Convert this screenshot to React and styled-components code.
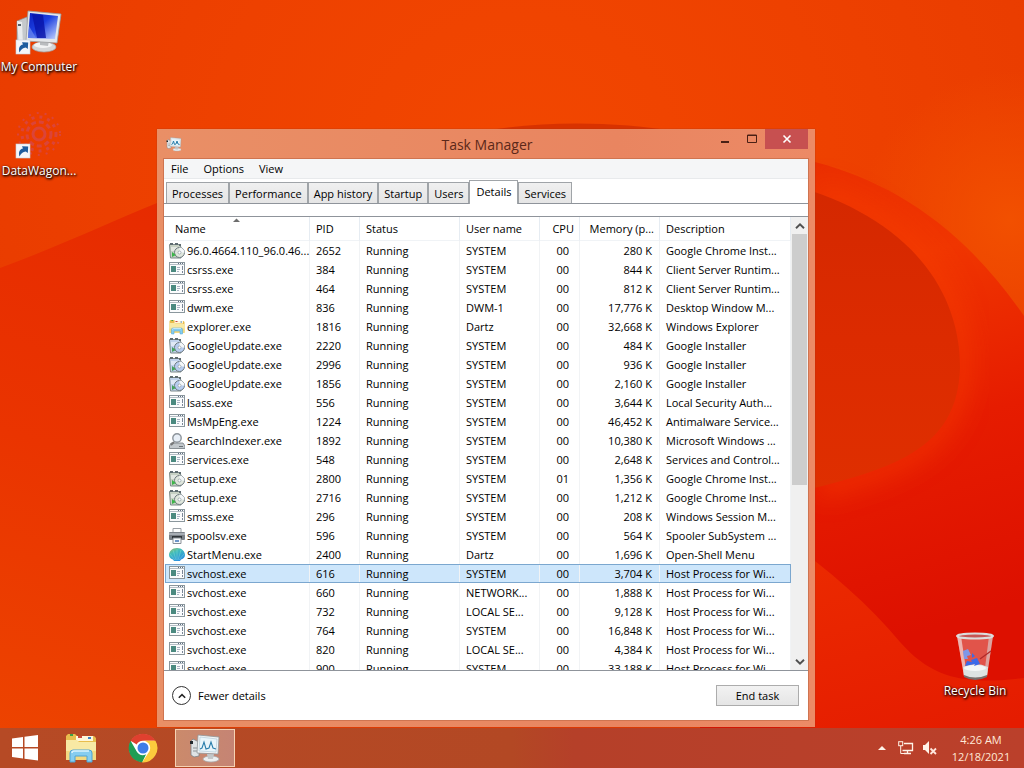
import { useState } from 'react';
import styled, { createGlobalStyle } from 'styled-components';

const columns = [
  { key: 'name', label: 'Name', width: 145 },
  { key: 'pid', label: 'PID', width: 50 },
  { key: 'status', label: 'Status', width: 100 },
  { key: 'user', label: 'User name', width: 80 },
  { key: 'cpu', label: 'CPU', width: 40, right: true },
  { key: 'memory', label: 'Memory (p...', width: 80, right: true },
  { key: 'description', label: 'Description' },
];

const processes = [
  ['setup', '96.0.4664.110_96.0.46...', '2652', 'SYSTEM', '00', '280 K', 'Google Chrome Inst...'],
  ['app', 'csrss.exe', '384', 'SYSTEM', '00', '844 K', 'Client Server Runtim...'],
  ['app', 'csrss.exe', '464', 'SYSTEM', '00', '812 K', 'Client Server Runtim...'],
  ['app', 'dwm.exe', '836', 'DWM-1', '00', '17,776 K', 'Desktop Window M...'],
  ['folder', 'explorer.exe', '1816', 'Dartz', '00', '32,668 K', 'Windows Explorer'],
  ['update', 'GoogleUpdate.exe', '2220', 'SYSTEM', '00', '484 K', 'Google Installer'],
  ['update', 'GoogleUpdate.exe', '2996', 'SYSTEM', '00', '936 K', 'Google Installer'],
  ['update', 'GoogleUpdate.exe', '1856', 'SYSTEM', '00', '2,160 K', 'Google Installer'],
  ['app', 'lsass.exe', '556', 'SYSTEM', '00', '3,644 K', 'Local Security Auth...'],
  ['app', 'MsMpEng.exe', '1224', 'SYSTEM', '00', '46,452 K', 'Antimalware Service...'],
  ['search', 'SearchIndexer.exe', '1892', 'SYSTEM', '00', '10,380 K', 'Microsoft Windows ...'],
  ['app', 'services.exe', '548', 'SYSTEM', '00', '2,648 K', 'Services and Control...'],
  ['setup', 'setup.exe', '2800', 'SYSTEM', '01', '1,356 K', 'Google Chrome Inst...'],
  ['setup', 'setup.exe', '2716', 'SYSTEM', '00', '1,212 K', 'Google Chrome Inst...'],
  ['app', 'smss.exe', '296', 'SYSTEM', '00', '208 K', 'Windows Session M...'],
  ['printer', 'spoolsv.exe', '596', 'SYSTEM', '00', '564 K', 'Spooler SubSystem ...'],
  ['shell', 'StartMenu.exe', '2400', 'Dartz', '00', '1,696 K', 'Open-Shell Menu'],
  ['app', 'svchost.exe', '616', 'SYSTEM', '00', '3,704 K', 'Host Process for Wi...'],
  ['app', 'svchost.exe', '660', 'NETWORK...', '00', '1,888 K', 'Host Process for Wi...'],
  ['app', 'svchost.exe', '732', 'LOCAL SE...', '00', '9,128 K', 'Host Process for Wi...'],
  ['app', 'svchost.exe', '764', 'SYSTEM', '00', '16,848 K', 'Host Process for Wi...'],
  ['app', 'svchost.exe', '820', 'LOCAL SE...', '00', '4,384 K', 'Host Process for Wi...'],
  ['app', 'svchost.exe', '900', 'SYSTEM', '00', '33,188 K', 'Host Process for Wi...'],
];

const tabs = ['Processes', 'Performance', 'App history', 'Startup', 'Users', 'Details', 'Services'];

const Wallpaper = () => (
  <WallpaperSvg viewBox="0 0 1024 768" preserveAspectRatio="none" aria-hidden="true">
    <defs>
      <radialGradient id="sky" cx="520" cy="170" r="620" gradientUnits="userSpaceOnUse">
        <stop offset="0" stopColor="#f24700" />
        <stop offset="0.5" stopColor="#ee4100" />
        <stop offset="1" stopColor="#e83b00" />
      </radialGradient>
      <radialGradient id="glow" cx="1010" cy="220" r="150" gradientUnits="userSpaceOnUse">
        <stop offset="0" stopColor="#f25000" />
        <stop offset="1" stopColor="#f25000" stopOpacity="0" />
      </radialGradient>
      <linearGradient id="hill" x1="0.3" y1="0" x2="0" y2="1">
        <stop offset="0" stopColor="#e62900" />
        <stop offset="0.5" stopColor="#ea3400" />
        <stop offset="1" stopColor="#ed4500" />
      </linearGradient>
      <linearGradient id="wave" x1="820" y1="160" x2="960" y2="620" gradientUnits="userSpaceOnUse">
        <stop offset="0" stopColor="#ea2e00" />
        <stop offset="0.25" stopColor="#f03600" />
        <stop offset="0.6" stopColor="#e61c00" />
        <stop offset="1" stopColor="#dd1000" />
      </linearGradient>
      <linearGradient id="disc" x1="0" y1="0" x2="0" y2="1">
        <stop offset="0" stopColor="#d42800" />
        <stop offset="0.5" stopColor="#dc2b00" />
        <stop offset="1" stopColor="#df2f00" />
      </linearGradient>
      <linearGradient id="petal" x1="0" y1="0" x2="0.3" y2="1">
        <stop offset="0" stopColor="#ec2c00" />
        <stop offset="1" stopColor="#e51c00" />
      </linearGradient>
      <filter id="soft" x="-20%" y="-20%" width="140%" height="140%">
        <feGaussianBlur stdDeviation="12" />
      </filter>
    </defs>
    <rect width="1024" height="768" fill="url(#sky)" />
    <rect x="800" y="60" width="224" height="280" fill="url(#glow)" />
    <path d="M0 268 C60 246 110 222 157 203 C270 150 420 140 600 150 V768 H0Z" fill="url(#hill)" />
    <path d="M450 138 C520 121 600 119 680 132 L815 162 V220 H450Z" fill="#d83200" />
    <path d="M700 140 C740 145 780 153 815 162 C895 183 965 230 1024 316 V768 H700Z" fill="url(#wave)" />
    <path
      d="M817 192 C900 220 960 280 960 365 C958 445 900 466 817 488"
      fill="none"
      stroke="#f63c00"
      strokeWidth="24"
      opacity="0.5"
      filter="url(#soft)"
    />
    <path d="M780 182 C890 208 960 275 960 368 C957 450 895 470 780 496Z" fill="url(#disc)" />
    <path d="M780 535 C830 570 870 606 900 642 C935 682 970 684 1024 678 V768 H780Z" fill="url(#petal)" />
  </WallpaperSvg>
);

const ShortcutArrow = ({ x = 0, y = 0 }) => (
  <g transform={`translate(${x} ${y})`}>
    <rect width="14" height="14" fill="#f4f6fa" stroke="#c9d2dc" strokeWidth="0.6" />
    <path d="M3.5 12.5 C2.2 8.5 3.5 5.2 7 4.6 L6 2.2 L12.2 2.6 L11.8 9 L9.8 7.4 C6.8 8 5 9.4 3.5 12.5Z" fill="#1e5c9e" />
  </g>
);

const ComputerIcon = () => (
  <svg width="48" height="48" viewBox="0 0 48 48" aria-hidden="true">
    <defs>
      <linearGradient id="screen" x1="0" y1="0" x2="1" y2="1">
        <stop offset="0" stopColor="#0a1fc0" />
        <stop offset="0.45" stopColor="#1c3fe0" />
        <stop offset="1" stopColor="#c8d8ff" />
      </linearGradient>
    </defs>
    <path d="M2 13 L12 9 L14 34 L4 37 L2 35Z" fill="#c5c9cc" stroke="#8d8f90" strokeWidth="0.7" />
    <path d="M2 13 L7 14 L8 37 L4 37Z" fill="#e9ebec" />
    <rect x="3" y="16" width="3" height="2" fill="#55606a" />
    <ellipse cx="29" cy="39" rx="12" ry="5" fill="#d4d6d8" stroke="#a3a5a7" strokeWidth="0.7" />
    <ellipse cx="28" cy="37" rx="9" ry="3" fill="#f2f3f4" />
    <path d="M25 32 L34 33 L33 38 L25 37Z" fill="#b9bcbf" />
    <path d="M13 3 L46 6 L42 35 L11 33Z" fill="#e4e7ea" stroke="#9a9da0" strokeWidth="0.8" />
    <path d="M15 5 L43 8 L40 31 L13 30Z" fill="url(#screen)" />
    <path d="M17 6 L28 7 L31 30 L22 30Z" fill="#0713a8" opacity="0.8" />
    <path d="M14 18 L21 30 L13 30Z" fill="#6d8cf0" opacity="0.7" />
    <ShortcutArrow x={1} y={32} />
  </svg>
);

const WagonIcon = () => (
  <svg width="48" height="48" viewBox="0 0 48 48" aria-hidden="true">
    <g fill="none" stroke="#cf4a68" opacity="0.55" transform="translate(0 -2)">
      <circle cx="24" cy="24" r="6" strokeWidth="3" />
      <circle cx="24" cy="24" r="12" strokeWidth="3" strokeDasharray="5 3" />
      <circle cx="24" cy="24" r="17" strokeWidth="3" strokeDasharray="3 5" />
      <circle cx="24" cy="24" r="21" strokeWidth="2" strokeDasharray="2 6" />
    </g>
    <ShortcutArrow x={1} y={32} />
  </svg>
);

const BinIcon = () => (
  <svg width="48" height="48" viewBox="0 0 48 48" aria-hidden="true">
    <path d="M6 4 L42 4 L36 44 Q24 50 13 44Z" fill="#e9d4d4" opacity="0.35" />
    <path d="M6 4 L10 4 L16 44 L13 44Z" fill="#f5f5f5" opacity="0.6" />
    <path d="M42 4 L38 4 L33 44 L36 44Z" fill="#d8d8d8" opacity="0.6" />
    <path d="M12 35 Q24 29 37 35 L36 44 Q24 50 13 44Z" fill="#dde3e2" />
    <ellipse cx="24" cy="36" rx="11" ry="3" fill="#f4f7f6" />
    <path d="M13 43 Q24 48 36 43 L36 45 Q24 51 13 45Z" fill="#77706d" />
    <ellipse cx="24" cy="4" rx="18" ry="2.5" fill="#c65555" stroke="#dcdcdc" strokeWidth="2" />
    <path d="M12 19 L17 17 L20 23 L16 24 L17 27 L13 27Z" fill="#7f97e8" />
    <path d="M21 21 L24 24 L21 26Z M20 28 L26 26 L29 32 L23 34 L24 32 L14 34 L16 29 L21 30Z" fill="#3b6ae8" />
    <path d="M29 27 L40 19" stroke="#b02a2a" strokeWidth="1.2" />
  </svg>
);

const MonitorIcon = ({ size }) => (
  <svg width={size} height={size} viewBox="0 0 32 32" aria-hidden="true">
    <path d="M2 9 L4 7 L10 10 V24 L5 25 L2 23Z" fill="#dfe3e5" stroke="#7d8285" strokeWidth="0.8" />
    <rect x="1" y="9" width="3" height="3" fill="#23282c" />
    <path d="M4 16 H10 M4 19 H10" stroke="#8c9296" />
    <ellipse cx="22" cy="27" rx="8" ry="3" fill="#eceeef" stroke="#a7abad" strokeWidth="0.8" />
    <path d="M18 22 H25 L24 27 H19Z" fill="#c3c7c9" />
    <path d="M9 3 L30 5 L29 22 L8 21Z" fill="#f2f4f5" stroke="#8f979b" strokeWidth="0.8" />
    <path d="M11 5 L28 7 L27 20 L10 19Z" fill="#e9f5fa" stroke="#a9c5d3" strokeWidth="0.6" />
    <path
      d="M11 17 L13 16 L15 10 L17 17 L20 16 L22 10 L24 16 L27 17"
      fill="none"
      stroke="#287dab"
      strokeWidth={size > 20 ? 1.1 : 2}
    />
  </svg>
);

const FolderIcon = ({ size }) => (
  <svg width={size} height={size} viewBox="0 0 32 32" aria-hidden="true">
    <path d="M1 4 L3 2 H10 L12 4 H29 L31 6 V27 H1Z" fill="#e8bd4d" />
    <rect x="5" y="2" width="3" height="2" fill="#3f9f4a" />
    <path d="M11 4 H28 V9 H11Z" fill="#fff6d8" />
    <rect x="13" y="4" width="4" height="2" fill="#c9483c" />
    <rect x="23" y="5" width="3" height="2" fill="#3a7fc4" />
    <path d="M1 8 H12 L14 10 H31 V28 H1Z" fill="#f8e9a4" />
    <path d="M1 19 H31 V28 H1Z" fill="#f3d981" />
    <path d="M5 30 V21 Q5 18 8 18 H24 Q27 18 27 21 V30 H22 V24 H10 V30Z" fill="#86cdf0" stroke="#4fa3d2" strokeWidth="1" />
    <path d="M7 21 Q7 19 9 19 H24" fill="none" stroke="#dcf3fd" strokeWidth="1.5" />
  </svg>
);

const AppIcon = () => (
  <svg width="16" height="16" viewBox="0 0 16 16" aria-hidden="true">
    <rect x="0.5" y="0.5" width="15" height="12" fill="#fbfcfd" stroke="#8b979d" />
    <path d="M1 2.5 H15" stroke="#b6bfc6" />
    <path d="M9 1.5 H10 M11 1.5 H12 M13 1.5 H14" stroke="#5f6f82" />
    <rect x="2" y="4" width="5" height="6" fill="#4b8a80" />
    <path d="M8 5.5 H11 M8 7.5 H11 M8 9.5 H10" stroke="#a9b5c4" />
    <path d="M13.5 4 V8 M13.5 9 V11" stroke="#7b8798" />
  </svg>
);

const InstallerIcon = ({ tint, disc, mark }) => (
  <svg width="16" height="16" viewBox="0 0 16 16" aria-hidden="true">
    <path d="M0.5 1.5 H10 L12 4 V15 H1.5Z" fill={tint} stroke="#7c8a8a" />
    <path d="M1 0 H4 V2 H1Z M6 0 H9 V2 H6Z M10 1 H12 V3 H10Z" fill="#5e6b70" />
    <path d="M2 5 H9 M2 7 H6" stroke="#ffffff" />
    <circle cx="10.5" cy="9.5" r="5" fill={disc} stroke="#6f7b80" />
    <path d="M10.5 4.5 A5 5 0 0 1 15.5 9.5 H10.5Z" fill="#f4f7f9" />
    <circle cx="10.5" cy="9.5" r="1.5" fill="#ffffff" stroke="#8d99a0" strokeWidth="0.7" />
    <path d="M3 9 L7 12 L3 14Z" fill={mark} />
  </svg>
);

const SearchIcon = () => (
  <svg width="16" height="16" viewBox="0 0 16 16" aria-hidden="true">
    <path d="M2 10 H14 L16 13 V15.5 H0.5 V13Z" fill="#c3c8cc" stroke="#747b80" strokeWidth="0.8" />
    <path d="M5 9 L2 12" stroke="#777" strokeWidth="2" />
    <circle cx="8" cy="5" r="4.2" fill="#e8eff7" stroke="#8d949b" strokeWidth="1.4" />
    <path d="M10 13.5 H14" stroke="#6b7276" />
  </svg>
);

const PrinterIcon = () => (
  <svg width="16" height="16" viewBox="0 0 16 16" aria-hidden="true">
    <path d="M4 0.5 H12 V5 H4Z" fill="#ffffff" stroke="#9aa0a6" />
    <rect x="0" y="4" width="16" height="8" rx="1" fill="#7b8188" />
    <path d="M0 5 H16 V7 H0Z" fill="#a8aeb5" />
    <rect x="3" y="8" width="10" height="3" fill="#2f3439" />
    <path d="M4 10 H12 V15.5 H4Z" fill="#f8fafc" stroke="#8a9097" />
    <rect x="6" y="12" width="4" height="2" fill="#6e95c8" />
  </svg>
);

const ShellIcon = () => (
  <svg width="16" height="16" viewBox="0 0 16 16" aria-hidden="true">
    <defs>
      <linearGradient id="shell" x1="0" y1="0" x2="0.6" y2="1">
        <stop offset="0" stopColor="#9dbb62" />
        <stop offset="0.4" stopColor="#42bdbb" />
        <stop offset="1" stopColor="#2b8fe0" />
      </linearGradient>
    </defs>
    <path d="M8 1 C13 1 16 4.5 16 8 C16 10.5 14 12 12 12.5 L11 14 H5 L4 12.5 C2 12 0 10.5 0 8 C0 4.5 3 1 8 1Z" fill="url(#shell)" />
    <path d="M8 13 V2 M7 13 L4 3 M9 13 L12 3 M6 13 L1 7 M10 13 L15 7" stroke="#8be3dc" strokeWidth="0.4" />
  </svg>
);

const processIcons = {
  app: <AppIcon />,
  folder: <FolderIcon size={16} />,
  setup: <InstallerIcon tint="#c6d0c3" disc="#dfe6dc" mark="#3cb54a" />,
  update: <InstallerIcon tint="#c0d2ec" disc="#b7cdf0" mark="#45a35e" />,
  search: <SearchIcon />,
  printer: <PrinterIcon />,
  shell: <ShellIcon />,
};

const StartIcon = () => (
  <svg width="28" height="28" viewBox="0 0 28 28" aria-hidden="true">
    <path d="M1 4.5 L12 3 V13 H1Z M13.5 2.8 L27 1 V13 H13.5Z M1 14.5 H12 V24.5 L1 23Z M13.5 14.5 H27 V26.5 L13.5 24.7Z" fill="#ffffff" />
  </svg>
);

const ChromeIcon = () => (
  <svg width="30" height="30" viewBox="0 0 48 48" aria-hidden="true">
    <circle cx="24" cy="24" r="22" fill="#ffffff" />
    <path d="M24 1 A23 23 0 0 1 43.9 12.5 H24 A11.5 11.5 0 0 0 14 18.2 L4.1 12.5 A23 23 0 0 1 24 1Z" fill="#e0402f" />
    <path d="M4.1 12.5 L14 29.7 A11.5 11.5 0 0 0 24 35.5 L29 34 L22.5 47 A23 23 0 0 1 4.1 12.5Z" fill="#1f9d54" />
    <path d="M43.9 12.5 A23 23 0 0 1 22.5 47 L34 29.7 A11.5 11.5 0 0 0 24 12.5Z" fill="#fccb3d" />
    <circle cx="24" cy="24" r="11" fill="#ffffff" />
    <circle cx="24" cy="24" r="8.8" fill="#3f7de8" />
  </svg>
);

const NetworkIcon = () => (
  <svg width="16" height="16" viewBox="0 0 16 16" fill="none" stroke="#fff3e8" aria-hidden="true">
    <path d="M6 3.5 H14.5 V10.5 H4.5 M9.5 11 V13 M6 13.5 H13" strokeWidth="1.3" />
    <rect x="0.7" y="1.7" width="4" height="4" />
    <path d="M2.7 6 V13.5 H6" />
  </svg>
);

const SpeakerIcon = () => (
  <svg width="16" height="16" viewBox="0 0 16 16" aria-hidden="true">
    <path d="M1 5 H3 L7 1 V14 L3 10 H1Z" fill="#fff3e8" />
    <path d="M8.5 8.5 L14 14 M14 8.5 L8.5 14" stroke="#ffe6dc" strokeWidth="1.8" />
  </svg>
);

const Chevron = ({ up, size = 8, color = '#505050' }) => (
  <svg width={size} height={size} viewBox="0 0 8 8" aria-hidden="true">
    <path d={up ? 'M0.8 5.8 L4 2.6 L7.2 5.8' : 'M0.8 2.2 L4 5.4 L7.2 2.2'} fill="none" stroke={color} strokeWidth="1.5" />
  </svg>
);

const TaskManager = () => {
  const [tab, setTab] = useState('Details');
  const [selected, setSelected] = useState('616');

  return (
    <Window>
      <TitleBar>
        <MonitorIcon size={16} />
        <Title>Task Manager</Title>
        <Controls>
          <ControlButton aria-label="Minimize">
            <svg width="10" height="12" viewBox="0 0 10 12">
              <path d="M1 9 H9" stroke="#4a2015" strokeWidth="2" />
            </svg>
          </ControlButton>
          <ControlButton aria-label="Maximize">
            <svg width="12" height="12" viewBox="0 0 12 12">
              <path d="M1.5 2 H10.5 V9.5 H1.5Z M1 2.5 H11" fill="none" stroke="#4a2015" />
            </svg>
          </ControlButton>
          <ControlButton $close aria-label="Close">
            <svg width="10" height="10" viewBox="0 0 10 10">
              <path d="M1.5 1.5 L8.5 8.5 M8.5 1.5 L1.5 8.5" stroke="#ffffff" strokeWidth="1.6" />
            </svg>
          </ControlButton>
        </Controls>
      </TitleBar>
      <Content>
        <MenuBar>
          <MenuItem>File</MenuItem>
          <MenuItem>Options</MenuItem>
          <MenuItem>View</MenuItem>
        </MenuBar>
        <TabList role="tablist">
          {tabs.map((name) => (
            <Tab key={name} role="tab" aria-selected={tab === name} $active={tab === name} onClick={() => setTab(name)}>
              {name}
            </Tab>
          ))}
        </TabList>
        <ListArea>
          <TableClip>
            <Table>
              <colgroup>
                {columns.map((col) => (
                  <col key={col.key} width={col.width} />
                ))}
              </colgroup>
              <thead>
                <tr>
                  {columns.map((col) => (
                    <HeadCell key={col.key} $right={col.right} $name={col.key === 'name'}>
                      {col.label}
                      {col.key === 'name' && (
                        <SortMark width="7" height="4" viewBox="0 0 7 4" aria-hidden="true">
                          <path d="M0 4 L3.5 0.5 L7 4Z" fill="#6d6d6d" />
                        </SortMark>
                      )}
                    </HeadCell>
                  ))}
                </tr>
              </thead>
              <tbody>
                {processes.map(([icon, name, pid, user, cpu, memory, description]) => (
                  <Row key={pid} $selected={selected === pid} onClick={() => setSelected(pid)}>
                    <Cell $name>
                      <NameBox>
                        {processIcons[icon]}
                        {name}
                      </NameBox>
                    </Cell>
                    <Cell>{pid}</Cell>
                    <Cell>Running</Cell>
                    <Cell>{user}</Cell>
                    <Cell $number $wide>{cpu}</Cell>
                    <Cell $number>{memory}</Cell>
                    <Cell>{description}</Cell>
                  </Row>
                ))}
              </tbody>
            </Table>
          </TableClip>
          <ScrollBar>
            <ScrollButton aria-label="Scroll up">
              <Chevron up size={10} />
            </ScrollButton>
            <ScrollTrack>
              <ScrollThumb />
            </ScrollTrack>
            <ScrollButton aria-label="Scroll down">
              <Chevron size={10} />
            </ScrollButton>
          </ScrollBar>
        </ListArea>
        <Footer>
          <FewerButton>
            <Circle>
              <Chevron up color="#222222" />
            </Circle>
            Fewer details
          </FewerButton>
          <EndButton>End task</EndButton>
        </Footer>
      </Content>
    </Window>
  );
};

export default function App() {
  return (
    <Screen>
      <GlobalStyle />
      <Wallpaper />
      <Desktop>
        <Shortcuts>
          <Shortcut>
            <ComputerIcon />
            My Computer
          </Shortcut>
          <Shortcut>
            <WagonIcon />
            DataWagon...
          </Shortcut>
        </Shortcuts>
        <BinSpot>
          <Shortcut>
            <BinIcon />
            Recycle Bin
          </Shortcut>
        </BinSpot>
        <TaskManager />
      </Desktop>
      <Taskbar>
        <StartButton aria-label="Start">
          <StartIcon />
        </StartButton>
        <TaskButton aria-label="File Explorer">
          <FolderIcon size={32} />
        </TaskButton>
        <TaskButton aria-label="Google Chrome">
          <ChromeIcon />
        </TaskButton>
        <TaskButton $active aria-label="Task Manager">
          <MonitorIcon size={32} />
        </TaskButton>
        <Tray>
          <TrayButton aria-label="Show hidden icons">
            <svg width="8" height="4" viewBox="0 0 8 4">
              <path d="M0 4 L4 0 L8 4Z" fill="#fff3e8" />
            </svg>
          </TrayButton>
          <TrayButton aria-label="Network">
            <NetworkIcon />
          </TrayButton>
          <TrayButton aria-label="Volume">
            <SpeakerIcon />
          </TrayButton>
          <Clock>
            <span>4:26 AM</span>
            <span>12/18/2021</span>
          </Clock>
        </Tray>
      </Taskbar>
    </Screen>
  );
}

const GlobalStyle = createGlobalStyle`
  * {
    box-sizing: border-box;
  }
  body {
    margin: 0;
    font-family: 'Open Sans', sans-serif;
    font-size: 11px;
    color: #000000;
  }
  button {
    font: inherit;
    color: inherit;
    border: 0;
    padding: 0;
    background: none;
  }
  svg {
    flex: none;
  }
`;

const Screen = styled.div`
  position: relative;
  display: flex;
  flex-direction: column;
  height: 100vh;
  min-height: 480px;
  overflow: hidden;
`;
const WallpaperSvg = styled.svg`
  position: absolute;
  inset: 0;
  width: 100%;
  height: 100%;
`;
const Desktop = styled.main`
  position: relative;
  flex: 1;
  min-height: 0;
`;
const Shortcuts = styled.div`
  position: absolute;
  left: 0;
  top: 8px;
  display: flex;
  flex-direction: column;
  gap: 34px;
`;
const BinSpot = styled.div`
  position: absolute;
  right: 10px;
  bottom: 26px;
`;
const Shortcut = styled.button`
  display: flex;
  flex-direction: column;
  align-items: center;
  width: 78px;
  height: 70px;
  line-height: 21px;
  font-size: 12px;
  white-space: nowrap;
  color: #ffffff;
  text-shadow: 1px 1px 2px #000000, 0 1px 3px #000000;
`;

const Window = styled.section`
  position: absolute;
  left: 157px;
  right: 209px;
  top: 129px;
  bottom: 1px;
  display: flex;
  flex-direction: column;
  padding: 0 7px 7px;
  background: linear-gradient(to right, #e98f66, #e98560 70%, #ec8a66);
  box-shadow: 0 0 1px #9c3a16;
`;
const TitleBar = styled.header`
  display: grid;
  grid-template-columns: 1fr auto 1fr;
  align-items: center;
  height: 30px;
  padding-left: 2px;
`;
const Title = styled.h1`
  margin: 0;
  font-size: 14px;
  font-weight: 400;
  color: #5c2819;
`;
const Controls = styled.div`
  display: flex;
  align-self: start;
  justify-content: flex-end;
`;
const ControlButton = styled.button`
  display: flex;
  align-items: center;
  justify-content: center;
  width: ${({ $close }) => ($close ? '43px' : '27px')};
  height: 20px;
  background: ${({ $close }) => ($close ? '#c75050' : 'transparent')};
`;
const Content = styled.div`
  display: flex;
  flex: 1;
  flex-direction: column;
  min-height: 0;
  background: #ffffff;
  box-shadow: 0 0 0 1px #cf7450;
`;
const MenuBar = styled.nav`
  display: flex;
  gap: 15px;
  height: 20px;
  padding-left: 7px;
  background: #f5f6f7;
  border-bottom: 1px solid #e8eaec;
`;
const MenuItem = styled.button`
  line-height: 19px;
`;
const TabList = styled.div`
  display: flex;
  align-items: flex-end;
  height: 25px;
  padding-left: 2px;
  border-bottom: 1px solid #8f949b;
`;
const Tab = styled.button`
  height: ${({ $active }) => ($active ? '24px' : '21px')};
  margin-bottom: ${({ $active }) => ($active ? '-1px' : '0')};
  padding: ${({ $active }) => ($active ? '0 6px 3px' : '0 5px')};
  border: 1px solid #a0a4a8;
  border-bottom: 0;
  background: ${({ $active }) => ($active ? '#ffffff' : 'linear-gradient(#f0f0f0, #e5e5e5)')};
`;
const ListArea = styled.div`
  display: flex;
  flex: 1;
  min-height: 0;
  margin-top: 12px;
  padding-left: 1px;
  border-top: 1px solid #8f949b;
  border-bottom: 1px solid #8f949b;
`;
const TableClip = styled.div`
  flex: 1;
  min-width: 0;
  overflow: hidden;
`;
const Table = styled.table`
  width: 100%;
  table-layout: fixed;
  border-collapse: separate;
  border-spacing: 0;
`;
const HeadCell = styled.th`
  position: relative;
  height: 24px;
  padding: ${({ $name, $right }) => ($name ? '0 0 0 10px' : $right ? '0 5px 0 0' : '0 0 0 6px')};
  border-right: 1px solid #e6ecf2;
  border-bottom: 1px solid #f0f3f6;
  font-weight: 400;
  text-align: ${({ $right }) => ($right ? 'right' : 'left')};
  white-space: nowrap;
`;
const SortMark = styled.svg`
  position: absolute;
  top: 1px;
  left: 50%;
  margin-left: -4px;
`;
const Cell = styled.td`
  height: 19px;
  padding: ${({ $name, $number, $wide }) => {
    if ($name) return '0 0 0 4px';
    if ($number) return $wide ? '0 10px 0 0' : '0 7px 0 0';
    return '0 0 0 6px';
  }};
  border-right: 1px solid #f1f3f5;
  line-height: 19px;
  text-align: ${({ $number }) => ($number ? 'right' : 'left')};
  white-space: nowrap;
`;
const Row = styled.tr`
  background: ${({ $selected }) => ($selected ? '#cde6fb' : 'transparent')};
  outline: ${({ $selected }) => ($selected ? '1px solid #7ba7cf' : 'none')};
  outline-offset: -1px;
`;
const NameBox = styled.div`
  display: flex;
  align-items: center;
  gap: 2px;
  height: 19px;
`;
const ScrollBar = styled.div`
  display: flex;
  flex-direction: column;
  width: 17px;
  background: #f0f0f0;
`;
const ScrollButton = styled.button`
  display: flex;
  align-items: center;
  justify-content: center;
  height: 17px;
`;
const ScrollTrack = styled.div`
  flex: 1;
  padding: 0 1px;
`;
const ScrollThumb = styled.div`
  height: 60%;
  background: #cdcdcd;
`;
const Footer = styled.footer`
  display: flex;
  align-items: center;
  justify-content: space-between;
  height: 49px;
  padding: 0 9px 0 8px;
`;
const FewerButton = styled.button`
  display: flex;
  align-items: center;
  gap: 7px;
`;
const Circle = styled.span`
  display: flex;
  align-items: center;
  justify-content: center;
  width: 19px;
  height: 19px;
  border: 1px solid #333333;
  border-radius: 50%;
`;
const EndButton = styled.button`
  width: 83px;
  height: 21px;
  border: 1px solid #acacac;
  background: linear-gradient(#f2f2f2, #e5e5e5);
`;

const Taskbar = styled.footer`
  position: relative;
  display: flex;
  gap: 2px;
  height: 40px;
  background: linear-gradient(to right, #b64a25, #b34824 50%, #b54029 56%, #bb402b);
`;
const StartButton = styled.button`
  display: flex;
  align-items: center;
  justify-content: center;
  width: 49px;
`;
const TaskButton = styled.button`
  display: flex;
  align-items: center;
  justify-content: center;
  width: 60px;
  height: 38px;
  margin-top: 1px;
  border: 1px solid ${({ $active }) => ($active ? '#f6d3b4' : 'transparent')};
  background: ${({ $active }) => ($active ? 'linear-gradient(to right, #cb8a6b, #c58474)' : 'transparent')};
`;
const Tray = styled.div`
  display: flex;
  align-items: center;
  gap: 8px;
  margin-left: auto;
  padding-right: 14px;
`;
const TrayButton = styled.button`
  display: flex;
  align-items: center;
  justify-content: center;
  min-width: 16px;
`;
const Clock = styled.time`
  display: flex;
  flex-direction: column;
  align-items: center;
  width: 58px;
  margin-left: 6px;
  line-height: 17px;
  color: #ffe9d8;
`;
